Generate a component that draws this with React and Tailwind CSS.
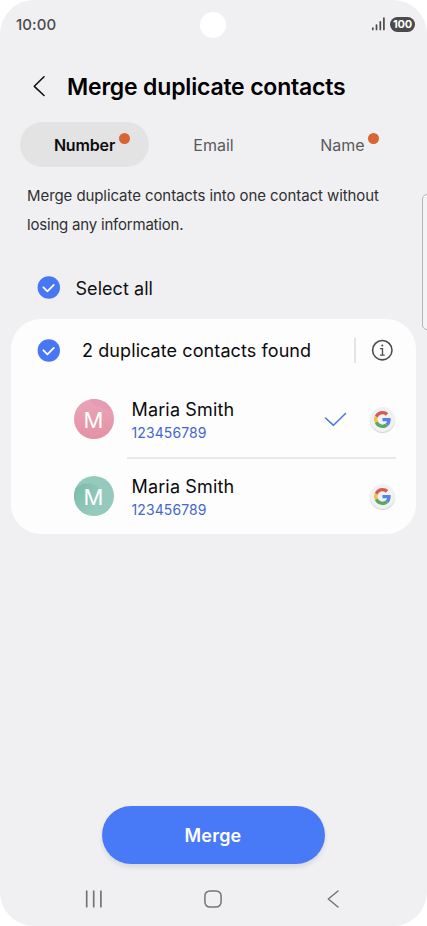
import React from "react";

function StatusBar() {
  return (
    <div className="relative flex h-12 items-center justify-between pl-[16px] pr-[12px] text-[#4a4a4c]">
      <span className="text-[15px] font-medium leading-none tracking-[0.1px]">10:00</span>
      <div className="absolute left-[200px] top-[12px] size-[26px] rounded-full bg-white" />
      <div className="flex items-center gap-[5px]">
        <svg width="14" height="14" viewBox="0 0 14 14" stroke="currentColor" strokeWidth="1.7" strokeLinecap="round">
          <path d="M1.8 11v1.4M5.5 8v4.4M9.3 4.8v7.6M12.9 1.2v11.2" />
        </svg>
        <span className="flex h-[15px] w-[25px] items-center justify-center rounded-full bg-[#4a4a4c] text-[11px] font-bold leading-none tracking-[-0.2px] text-white">100</span>
      </div>
    </div>
  );
}

function CheckCircle() {
  return (
    <svg className="shrink-0" width="23" height="23" viewBox="0 0 23 23" fill="none">
      <circle cx="11.8" cy="11.5" r="11.2" fill="#4877f6" />
      <path d="M6.4 11.3l4 4 6.4-6.4" stroke="#fff" strokeWidth="1.8" strokeLinecap="round" strokeLinejoin="round" />
    </svg>
  );
}

function GoogleBadge() {
  return (
    <div className="flex size-[25px] items-center justify-center rounded-full bg-[#f1f1f2] shadow-[0_1px_1px_rgba(0,0,0,0.18)]">
      <svg width="17" height="17" viewBox="0 0 48 48">
        <path fill="#5384e6" d="M46.98 24.55c0-1.57-.15-3.09-.38-4.55H24v9.02h12.94c-.58 2.96-2.26 5.48-4.78 7.18l7.73 6c4.51-4.18 7.09-10.36 7.09-17.65z" />
        <path fill="#58a763" d="M24 48c6.48 0 11.93-2.13 15.89-5.81l-7.73-6c-2.15 1.45-4.92 2.3-8.16 2.3-6.26 0-11.57-4.22-13.47-9.91l-7.98 6.19C6.51 42.62 14.62 48 24 48z" />
        <path fill="#f2c14b" d="M10.53 28.59c-.48-1.45-.76-2.99-.76-4.59s.27-3.14.76-4.59l-7.98-6.19C.92 16.46 0 20.12 0 24s.92 7.54 2.56 10.78z" />
        <path fill="#d55b50" d="M24 9.5c3.54 0 6.71 1.22 9.21 3.6l6.85-6.85C35.9 2.38 30.47 0 24 0 14.62 0 6.51 5.38 2.56 13.22l7.98 6.19C12.43 13.72 17.74 9.5 24 9.5z" />
      </svg>
    </div>
  );
}

function Avatar({ tone }) {
  const pink = tone === "pink";
  return (
    <div className={`relative flex size-10 shrink-0 items-center justify-center overflow-hidden rounded-full text-[22px] leading-none text-white ${pink ? "bg-linear-to-b from-[#e9a5b8] to-[#e591a5]" : "bg-[#94cabb]"}`}>
      <svg className="absolute inset-0" width="40" height="40" viewBox="0 0 40 40">
        {pink ? (
          <path d="M15 0C20 10 30 7 39 14V0Z" fill="#e59bb3" />
        ) : (
          <>
            <defs>
              <linearGradient id="greenWave" x1="0" y1="0" x2="1" y2="1">
                <stop offset="0.2" stopColor="#80bfae" />
                <stop offset="0.75" stopColor="#94cabb" />
              </linearGradient>
            </defs>
            <path d="M0 13C11 4 22 7 26 14C31 25 23 37 8 40H0Z" fill="url(#greenWave)" />
          </>
        )}
      </svg>
      <span className="relative top-[1px]">M</span>
    </div>
  );
}

function ContactRow({ tone, checked }) {
  return (
    <div className="flex h-[76px] items-center pl-[62.5px] pr-[21px]">
      <Avatar tone={tone} />
      <div className="ml-[18px] flex flex-1 flex-col pt-[4px]">
        <span className="text-[18px] leading-[23px] tracking-[0.15px] text-[#0b0b0c]">Maria Smith</span>
        <span className="text-[14px] leading-[23px] tracking-[0.1px] text-[#4467cd]">123456789</span>
      </div>
      {checked && (
        <svg className="mr-[23px]" width="23" height="16" viewBox="0 0 23 16" fill="none" stroke="#4d78e2" strokeWidth="1.6" strokeLinecap="round" strokeLinejoin="round">
          <path d="M1.5 7l8 7.3L21.5 2.5" />
        </svg>
      )}
      <GoogleBadge />
    </div>
  );
}

const Dot = ({ className }) => <span className={`absolute -top-[2px] size-[11px] rounded-full bg-[#d96532] ${className}`} />;

export default function App() {
  return (
    <div className="h-[926px] w-[427px] overflow-hidden bg-white font-['Inter','Liberation_Sans',sans-serif]">
      <main className="relative flex h-full flex-col overflow-hidden rounded-[34px] bg-[#f0f0f2]">
        <StatusBar />
        <header className="flex h-[74px] items-center pl-[32px] pt-[4px]">
          <svg className="-mt-[3px]" width="14" height="22" viewBox="0 0 14 22" fill="none" stroke="#111" strokeWidth="1.6" strokeLinecap="round" strokeLinejoin="round">
            <path d="M12 1.8L2.3 11.3l9.7 9.2" />
          </svg>
          <h1 className="ml-[21px] whitespace-nowrap text-[23px] font-semibold leading-none tracking-[-0.19px] text-black">Merge duplicate contacts</h1>
        </header>
        <nav className="ml-[20px] flex h-[45px] w-[387px] text-[16px] leading-[20px] text-[#59595b]">
          <div className="flex flex-1 items-center justify-center rounded-full bg-[#e3e3e4] font-semibold text-[#0c0c0d]">
            <span className="relative tracking-[-0.15px]">Number<Dot className="-right-[15px]" /></span>
          </div>
          <div className="flex flex-1 items-center justify-center">Email</div>
          <div className="flex flex-1 items-center justify-center">
            <span className="relative">Name<Dot className="-right-[14px]" /></span>
          </div>
        </nav>
        <p className="mt-[15px] whitespace-nowrap pl-[27px] text-[15px] leading-[28.5px] text-[#303032]">
          <span className="tracking-[-0.08px]">Merge duplicate contacts into one contact without</span>
          <br />
          <span className="tracking-[-0.2px]">losing any information.</span>
        </p>
        <div className="mt-[27px] flex h-[42px] items-center pl-[37px] text-[18px] text-[#111]">
          <CheckCircle />
          <span className="ml-[15.5px] pt-[2px] tracking-[0.05px]">Select all</span>
        </div>
        <section className="ml-[11px] mt-[11px] h-[215px] w-[405px] rounded-[30px] bg-[#fdfdfe]">
          <div className="flex h-[62px] items-center pl-[26px] pr-[22px]">
            <CheckCircle />
            <span className="ml-[22px] flex-1 whitespace-nowrap pt-px text-[18px] tracking-[0.09px] text-[#0b0b0c]">2 duplicate contacts found</span>
            <span className="h-[25px] w-[2px] bg-[#e4e4e6]" />
            <svg className="ml-[15px]" width="23" height="23" viewBox="0 0 23 23" fill="none" stroke="#4c4c4e" strokeWidth="1.6">
              <circle cx="11.3" cy="11.2" r="9.7" />
              <path d="M9.1 9.7h2.4v6.6M9.1 16.2h4.6" strokeWidth="1.3" />
              <circle cx="11.3" cy="6.6" r="1" fill="#4c4c4e" stroke="none" />
            </svg>
          </div>
          <ContactRow tone="pink" checked />
          <div className="ml-[116px] h-[2px] w-[269px] bg-[#e9e9eb]" />
          <div className="-mt-px"><ContactRow tone="green" /></div>
        </section>
        <button className="ml-[101.5px] mt-[272px] h-[58px] w-[223px] rounded-full bg-[#4879f6] text-[18px] font-semibold tracking-[0.2px] text-white shadow-[0_3px_5px_rgba(0,0,0,0.1)]">Merge</button>
        <div className="mt-[24px] flex h-[22px] items-center pl-[85px] text-[#747476]">
          <svg width="18" height="18" viewBox="0 0 18 18" stroke="currentColor" strokeWidth="1.7" strokeLinecap="round">
            <path d="M1.7 1.2v15.5M8.7 1.2v15.5M15.9 1.2v15.5" />
          </svg>
          <svg className="ml-[101px]" width="18" height="18" viewBox="0 0 18 18" fill="none" stroke="currentColor" strokeWidth="1.5">
            <rect x="0.9" y="0.9" width="16.2" height="16.2" rx="5" />
          </svg>
          <svg className="ml-[104.5px]" width="12" height="18" viewBox="0 0 12 18" fill="none" stroke="currentColor" strokeWidth="1.5" strokeLinecap="round" strokeLinejoin="round">
            <path d="M11 1L1.3 9l9.7 8" />
          </svg>
        </div>
        <div className="absolute -right-[6px] top-[194px] h-[136px] w-[11px] rounded-[5px] border border-[#b5b5b7] bg-[#f4f4f6]" />
      </main>
    </div>
  );
}
